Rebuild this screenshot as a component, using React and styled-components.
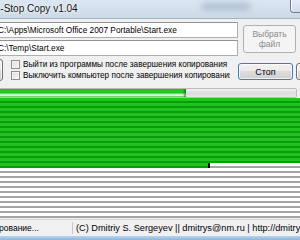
import React from "react";
import styled, { createGlobalStyle } from "styled-components";

const GlobalStyle = createGlobalStyle`
  html, body {
    margin: 0;
    padding: 0;
    overflow: hidden;
    background: #f0f0f0;
  }
  body {
    font-family: "Liberation Sans", Arial, sans-serif;
  }
`;

const Window = styled.div`
  width: 300px;
  height: 240px;
  overflow: hidden;
  display: flex;
  flex-direction: column;
  background: #f0f0f0;
  font-size: 8.5px;
  color: #000;
`;

const TitleBar = styled.div`
  flex: none;
  height: 18px;
  display: flex;
  align-items: flex-start;
  overflow: hidden;
  background: linear-gradient(180deg, #dbe6f1 0%, #d3dfeb 60%, #cbd8e6 100%);
  border-bottom: 1px solid #a3b4c6;
`;

const Title = styled.span`
  margin-left: -18px;
  margin-top: 3px;
  font-size: 10px;
  color: #111;
  white-space: nowrap;
  text-shadow: 0 0 4px #ffffff, 0 0 2px #ffffff;
`;

const GlassBlur = styled.span`
  margin-left: auto;
  margin-top: 3px;
  width: 48px;
  height: 7px;
  background: #9aaec3;
  filter: blur(3px);
  opacity: 0.7;
`;

const CaptionButton = styled.span`
  margin-left: 40px;
  margin-right: -12px;
  margin-top: -1px;
  width: 20px;
  height: 13px;
  border: 1px solid #6a7c92;
  border-top: none;
  border-radius: 0 0 0 4px;
  background: linear-gradient(180deg, #e6eef7 0%, #cfdbe8 100%);
  box-shadow: inset 1px 0 0 #ffffff;
`;

const Body = styled.div`
  flex: 1;
  display: flex;
  flex-direction: column;
  margin-left: -6px;
  width: 306px;
`;

const TopRow = styled.div`
  display: flex;
  align-items: center;
  gap: 5px;
  margin-top: 3px;
`;

const Fields = styled.div`
  width: 244px;
  display: flex;
  flex-direction: column;
  gap: 2px;
`;

const Field = styled.div`
  box-sizing: border-box;
  height: 16px;
  padding: 0 3px;
  display: flex;
  align-items: center;
  font-size: 8.3px;
  background: #ffffff;
  border: 1px solid #abadb3;
  border-top-color: #8e9297;
  white-space: nowrap;
  overflow: hidden;
`;

const Button = styled.button`
  box-sizing: border-box;
  font-family: inherit;
  font-size: 8.5px;
  line-height: 10px;
  padding: 0;
  border-radius: 3px;
  border: 1px solid ${(p) => (p.$default ? "#3c7fb1" : p.disabled ? "#adb2b5" : "#707070")};
  color: ${(p) => (p.disabled ? "#8a8a8a" : "#000")};
  background: ${(p) =>
    p.disabled
      ? "#f4f4f4"
      : "linear-gradient(180deg, #f2f2f2 0%, #ebebeb 49%, #dddddd 50%, #cfcfcf 100%)"};
  box-shadow: inset 0 0 0 1px ${(p) => (p.disabled ? "#f4f4f4" : "rgba(255,255,255,0.7)")};
`;

const PickButton = styled(Button)`
  width: 53px;
  height: 28px;
`;

const OptionsRow = styled.div`
  display: flex;
  align-items: flex-start;
  margin-top: 2px;
  height: 25px;
`;

const LeftEdge = styled(Button)`
  flex: none;
  width: 20px;
  height: 22px;
  margin-left: -11px;
  margin-top: 1px;
`;

const Checks = styled.div`
  display: flex;
  flex-direction: column;
  gap: 1px;
  margin-left: 8px;
  margin-top: 1px;
  width: 219px;
  flex: none;
  overflow: hidden;
  font-size: 8.2px;
`;

const CheckLine = styled.label`
  display: flex;
  align-items: center;
  gap: 3px;
  height: 10px;
  white-space: nowrap;
`;

const Box = styled.span`
  box-sizing: border-box;
  flex: none;
  width: 9px;
  height: 9px;
  border: 1px solid #8f8f8f;
  background: linear-gradient(135deg, #dcdcdc 0%, #f6f6f6 100%);
  box-shadow: inset 0 0 0 1px #f4f4f4;
`;

const StopButton = styled(Button)`
  flex: none;
  width: 55px;
  height: 17px;
  margin-left: 8px;
  margin-top: 5px;
  font-size: 9px;
`;

const RightEdge = styled(Button)`
  flex: none;
  width: 20px;
  height: 17px;
  margin-left: 3px;
  margin-top: 5px;
`;

const Progress = styled.div`
  box-sizing: border-box;
  margin-top: 5px;
  margin-right: 3px;
  height: 10px;
  border: 1px solid #bcbcbc;
  border-radius: 2px;
  background: linear-gradient(180deg, #f2f2f2 0%, #dadada 50%, #e8e8e8 100%);
  overflow: hidden;
  display: flex;
`;

const ProgressFill = styled.div`
  height: 100%;
  background: linear-gradient(
    180deg,
    #2fd12f 0%,
    #22c322 45%,
    #c9f5c9 70%,
    #f4fff4 85%,
    #3acb3a 100%
  );
  box-shadow: inset -2px 0 2px rgba(0, 80, 0, 0.5);
`;

const Map = styled.div`
  margin-left: 6px;
  display: flex;
  flex-direction: column;
`;

const MapRow = styled.div`
  position: relative;
  height: 5px;
  box-sizing: border-box;
  border-bottom: 2px solid #a4a4a4;
  background: #ffffff;
`;

const RowFill = styled.div`
  height: 5px;
  box-sizing: border-box;
  border-bottom: 2px solid #0e9a0e;
  background: #1fc41f;
`;

const Marker = styled.span`
  position: absolute;
  top: 0;
  width: 2px;
  height: 5px;
  background: #111;
`;

const StatusBar = styled.div`
  flex: none;
  margin-top: auto;
  height: 16px;
  display: flex;
  align-items: center;
  border-top: 1px solid #d7d7d7;
  background: #f0f0f0;
  white-space: nowrap;
  overflow: hidden;
`;

const StatusPanel = styled.span`
  flex: none;
  width: ${(p) => p.$width || "auto"};
  padding-left: ${(p) => p.$pad || "0"};
  border-right: ${(p) => (p.$sep ? "1px solid #c5c5c5" : "none")};
  font-size: ${(p) => p.$size || "8.5px"};
  height: 12px;
  line-height: 12px;
  overflow: hidden;
`;

const StatusText = styled.span`
  display: inline-block;
  margin-left: ${(p) => p.$shift || "0"};
`;

const BottomFrame = styled.div`
  flex: none;
  height: 4px;
  background: linear-gradient(180deg, #b9d3ec 0%, #8fb5dc 100%);
`;

const rows = [
  ...Array(13).fill(100),
  69.3,
  ...Array(10).fill(0),
];

export default function App() {
  return (
    <Window>
      <GlobalStyle />
      <TitleBar>
        <Title>Non-Stop Copy v1.04</Title>
        <GlassBlur />
        <CaptionButton />
      </TitleBar>
      <Body>
        <TopRow>
          <Fields>
            <Field>C:\Apps\Microsoft Office 2007 Portable\Start.exe</Field>
            <Field>C:\Temp\Start.exe</Field>
          </Fields>
          <PickButton disabled>
            Выбрать
            <br />
            файл
          </PickButton>
        </TopRow>
        <OptionsRow>
          <LeftEdge />
          <Checks>
            <CheckLine>
              <Box />
              Выйти из программы после завершения копирования
            </CheckLine>
            <CheckLine>
              <Box />
              Выключить компьютер после завершения копирования
            </CheckLine>
          </Checks>
          <StopButton $default>Стоп</StopButton>
          <RightEdge />
        </OptionsRow>
        <Progress>
          <ProgressFill style={{ width: "63.5%" }} />
        </Progress>
        <Map>
          {rows.map((fill, i) => (
            <MapRow key={i}>
              {fill > 0 && <RowFill style={{ width: `${fill}%` }} />}
              {fill > 0 && fill < 100 && <Marker style={{ left: `${fill}%` }} />}
            </MapRow>
          ))}
        </Map>
      </Body>
      <StatusBar>
        <StatusPanel $width="72px" $sep>
          <StatusText $shift="-20px">Копирование...</StatusText>
        </StatusPanel>
        <StatusPanel $pad="3px" $size="9.2px">
          (C) Dmitriy S. Sergeyev || dmitrys@nm.ru | http://dmitrys.nm.ru
        </StatusPanel>
      </StatusBar>
      <BottomFrame />
    </Window>
  );
}
